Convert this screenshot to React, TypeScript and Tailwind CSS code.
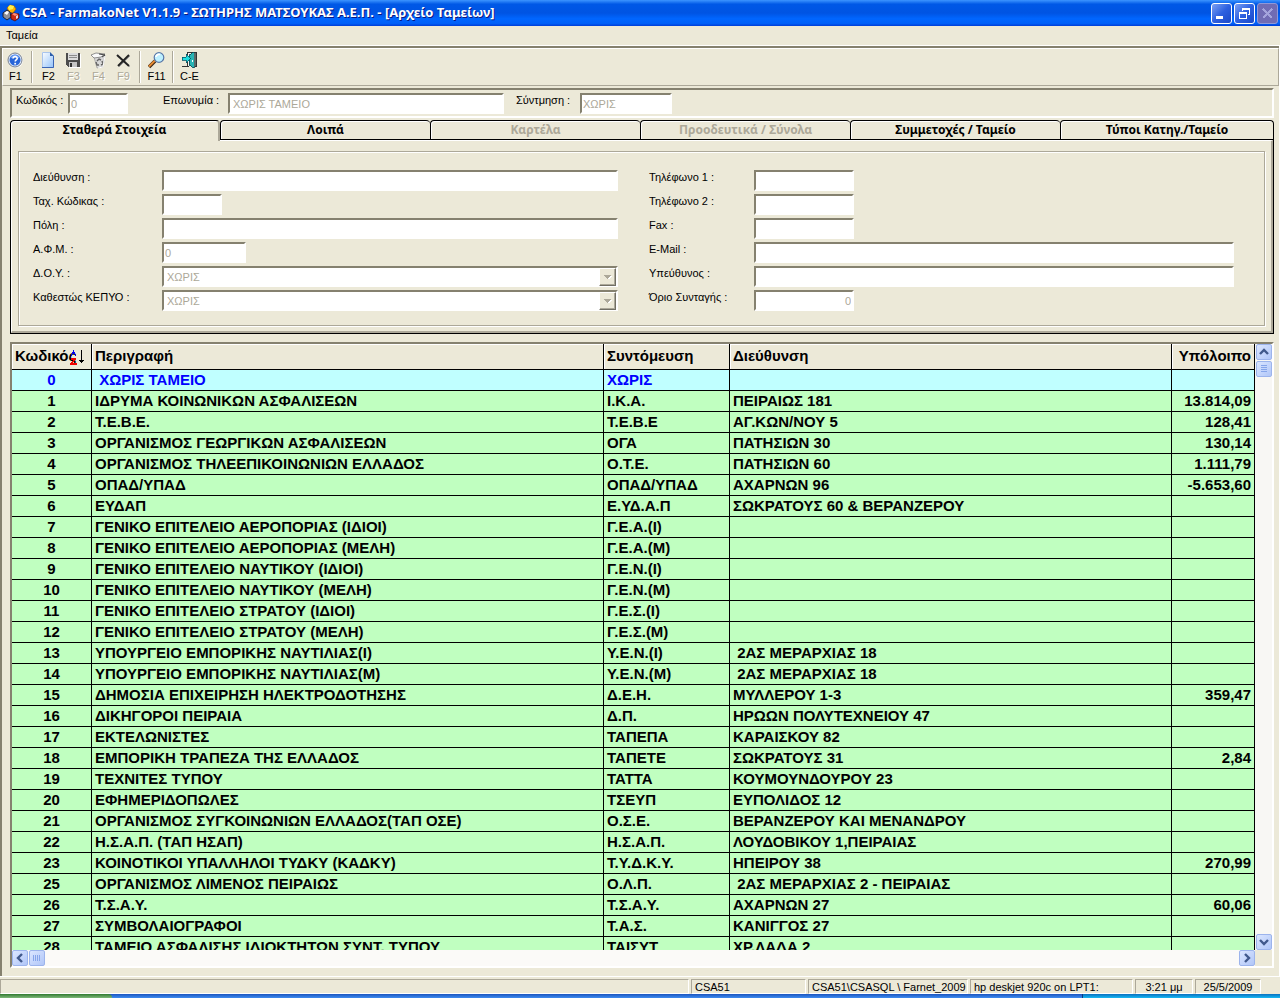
import React from "react";
import clsx from "clsx";

type Fund = [string, string, string, string, string];

const funds: Fund[] = [
  ["0", " ΧΩΡΙΣ ΤΑΜΕΙΟ", "ΧΩΡΙΣ", "", ""],
  ["1", "ΙΔΡΥΜΑ ΚΟΙΝΩΝΙΚΩΝ ΑΣΦΑΛΙΣΕΩΝ", "Ι.Κ.Α.", "ΠΕΙΡΑΙΩΣ 181", "13.814,09"],
  ["2", "Τ.Ε.Β.Ε.", "Τ.Ε.Β.Ε", "ΑΓ.ΚΩΝ/ΝΟΥ 5", "128,41"],
  ["3", "ΟΡΓΑΝΙΣΜΟΣ ΓΕΩΡΓΙΚΩΝ ΑΣΦΑΛΙΣΕΩΝ", "ΟΓΑ", "ΠΑΤΗΣΙΩΝ 30", "130,14"],
  ["4", "ΟΡΓΑΝΙΣΜΟΣ ΤΗΛΕΕΠΙΚΟΙΝΩΝΙΩΝ ΕΛΛΑΔΟΣ", "Ο.Τ.Ε.", "ΠΑΤΗΣΙΩΝ 60", "1.111,79"],
  ["5", "ΟΠΑΔ/ΥΠΑΔ", "ΟΠΑΔ/ΥΠΑΔ", "ΑΧΑΡΝΩΝ 96", "-5.653,60"],
  ["6", "ΕΥΔΑΠ", "Ε.ΥΔ.Α.Π", "ΣΩΚΡΑΤΟΥΣ 60 & ΒΕΡΑΝΖΕΡΟΥ", ""],
  ["7", "ΓΕΝΙΚΟ ΕΠΙΤΕΛΕΙΟ ΑΕΡΟΠΟΡΙΑΣ (ΙΔΙΟΙ)", "Γ.Ε.Α.(Ι)", "", ""],
  ["8", "ΓΕΝΙΚΟ ΕΠΙΤΕΛΕΙΟ ΑΕΡΟΠΟΡΙΑΣ (ΜΕΛΗ)", "Γ.Ε.Α.(Μ)", "", ""],
  ["9", "ΓΕΝΙΚΟ ΕΠΙΤΕΛΕΙΟ ΝΑΥΤΙΚΟΥ (ΙΔΙΟΙ)", "Γ.Ε.Ν.(Ι)", "", ""],
  ["10", "ΓΕΝΙΚΟ ΕΠΙΤΕΛΕΙΟ ΝΑΥΤΙΚΟΥ (ΜΕΛΗ)", "Γ.Ε.Ν.(Μ)", "", ""],
  ["11", "ΓΕΝΙΚΟ ΕΠΙΤΕΛΕΙΟ ΣΤΡΑΤΟΥ (ΙΔΙΟΙ)", "Γ.Ε.Σ.(Ι)", "", ""],
  ["12", "ΓΕΝΙΚΟ ΕΠΙΤΕΛΕΙΟ ΣΤΡΑΤΟΥ (ΜΕΛΗ)", "Γ.Ε.Σ.(Μ)", "", ""],
  ["13", "ΥΠΟΥΡΓΕΙΟ ΕΜΠΟΡΙΚΗΣ ΝΑΥΤΙΛΙΑΣ(Ι)", "Υ.Ε.Ν.(Ι)", " 2ΑΣ ΜΕΡΑΡΧΙΑΣ 18", ""],
  ["14", "ΥΠΟΥΡΓΕΙΟ ΕΜΠΟΡΙΚΗΣ ΝΑΥΤΙΛΙΑΣ(Μ)", "Υ.Ε.Ν.(Μ)", " 2ΑΣ ΜΕΡΑΡΧΙΑΣ 18", ""],
  ["15", "ΔΗΜΟΣΙΑ ΕΠΙΧΕΙΡΗΣΗ ΗΛΕΚΤΡΟΔΟΤΗΣΗΣ", "Δ.Ε.Η.", "ΜΥΛΛΕΡΟΥ 1-3", "359,47"],
  ["16", "ΔΙΚΗΓΟΡΟΙ ΠΕΙΡΑΙΑ", "Δ.Π.", "ΗΡΩΩΝ ΠΟΛΥΤΕΧΝΕΙΟΥ 47", ""],
  ["17", "ΕΚΤΕΛΩΝΙΣΤΕΣ", "ΤΑΠΕΠΑ", "ΚΑΡΑΙΣΚΟΥ 82", ""],
  ["18", "ΕΜΠΟΡΙΚΗ ΤΡΑΠΕΖΑ ΤΗΣ ΕΛΛΑΔΟΣ", "ΤΑΠΕΤΕ", "ΣΩΚΡΑΤΟΥΣ 31", "2,84"],
  ["19", "ΤΕΧΝΙΤΕΣ ΤΥΠΟΥ", "ΤΑΤΤΑ", "ΚΟΥΜΟΥΝΔΟΥΡΟΥ 23", ""],
  ["20", "ΕΦΗΜΕΡΙΔΟΠΩΛΕΣ", "ΤΣΕΥΠ", "ΕΥΠΟΛΙΔΟΣ 12", ""],
  ["21", "ΟΡΓΑΝΙΣΜΟΣ ΣΥΓΚΟΙΝΩΝΙΩΝ ΕΛΛΑΔΟΣ(ΤΑΠ ΟΣΕ)", "Ο.Σ.Ε.", "ΒΕΡΑΝΖΕΡΟΥ ΚΑΙ ΜΕΝΑΝΔΡΟΥ", ""],
  ["22", "Η.Σ.Α.Π. (ΤΑΠ ΗΣΑΠ)", "Η.Σ.Α.Π.", "ΛΟΥΔΟΒΙΚΟΥ 1,ΠΕΙΡΑΙΑΣ", ""],
  ["23", "ΚΟΙΝΟΤΙΚΟΙ ΥΠΑΛΛΗΛΟΙ ΤΥΔΚΥ (ΚΑΔΚΥ)", "Τ.Υ.Δ.Κ.Υ.", "ΗΠΕΙΡΟΥ 38", "270,99"],
  ["25", "ΟΡΓΑΝΙΣΜΟΣ ΛΙΜΕΝΟΣ ΠΕΙΡΑΙΩΣ", "Ο.Λ.Π.", " 2ΑΣ ΜΕΡΑΡΧΙΑΣ 2 - ΠΕΙΡΑΙΑΣ", ""],
  ["26", "Τ.Σ.Α.Υ.", "Τ.Σ.Α.Υ.", "ΑΧΑΡΝΩΝ 27", "60,06"],
  ["27", "ΣΥΜΒΟΛΑΙΟΓΡΑΦΟΙ", "Τ.Α.Σ.", "ΚΑΝΙΓΓΟΣ 27", ""],
  ["28", "ΤΑΜΕΙΟ ΑΣΦΑΛΙΣΗΣ ΙΔΙΟΚΤΗΤΩΝ ΣΥΝΤ. ΤΥΠΟΥ", "ΤΑΙΣΥΤ", "ΧΡ.ΛΑΔΑ 2", ""],
];

const tabs = [
  { title: "Σταθερά Στοιχεία", disabled: false },
  { title: "Λοιπά", disabled: false },
  { title: "Καρτέλα", disabled: true },
  { title: "Προοδευτικά / Σύνολα", disabled: true },
  { title: "Συμμετοχές / Ταμείο", disabled: false },
  { title: "Τύποι Κατηγ./Ταμείο", disabled: false },
];

const sunken =
  "border-2 border-t-[#85816f] border-l-[#85816f] border-b-white border-r-white";

const AppIcon = () => (
  <svg className="h-[18px] w-[18px]" viewBox="0 0 18 18">
    <path d="M5 4l3-3 4 1 2 3-3 4-4-1z" fill="#ffb400" stroke="#a86000" strokeWidth="0.7" />
    <path d="M6 3l2-2 4 1-1 3-4 1z" fill="#fff04a" />
    <path d="M1 9l4-3 3 2 1 5-4 3-4-3z" fill="#8f8f96" stroke="#1c1c28" strokeWidth="0.9" />
    <path d="M2 9l3-2 2 1-2 3z" fill="#fff" />
    <path d="M9 10l3-1 5 1v4l-4 3-4-2z" fill="#c82a14" stroke="#400808" strokeWidth="0.7" />
    <path d="M10 10l2-1 4 1-3 2z" fill="#ff8c78" />
    <path d="M14 12l2-1v3l-2 1z" fill="#e8d8e0" />
  </svg>
);

const HelpIcon = () => (
  <svg className="h-[17px] w-[17px]" viewBox="0 0 17 17">
    <circle cx="8.500" cy="8.500" r="7.500" fill="#fff" />
    <circle cx="8" cy="8" r="7" fill="#dce8fa" stroke="#777f8c" />
    <circle cx="8" cy="8" r="5.500" fill="#2865d8" />
    <path d="M4 6a4.500 4.500 0 0 1 8 0" stroke="#6da0f8" strokeWidth="1.5" fill="none" />
    <path d="M6 6.500C6 4 10.500 4 10.200 6.400 10 8 8.200 7.800 8.200 9.600" stroke="#fff" strokeWidth="1.6" fill="none" />
    <rect x="7.300" y="10.800" width="1.800" height="1.700" fill="#fff" />
  </svg>
);

const NewIcon = () => (
  <svg className="h-[17px] w-[17px]" viewBox="0 0 17 17">
    <defs>
      <linearGradient id="sheet" x1="0" y1="0" x2="1" y2="1">
        <stop offset="0" stopColor="#fff" />
        <stop offset="1" stopColor="#8fc0fa" />
      </linearGradient>
    </defs>
    <path d="M2 0h8l4 4v12H2z" fill="url(#sheet)" />
    <path d="M2.500 16V.5H10" fill="none" stroke="#a9c4ec" />
    <path d="M13.500 4v11.500H2" fill="none" stroke="#3a64b4" />
    <path d="M10 0v4h4z" fill="#2e5ea8" />
  </svg>
);

const SaveIcon = () => (
  <svg className="h-[17px] w-[17px]" viewBox="0 0 17 17" shapeRendering="crispEdges">
    <path d="M2 2h14v14H4l-2-2z" fill="#fff" />
    <path d="M1 1h14v14H3l-2-2z" fill="#4c4c4c" />
    <rect x="3" y="1" width="10" height="7" fill="#dcdcdc" />
    <path d="M4 3.500h8M4 5.500h8" stroke="#8c8c8c" />
    <rect x="4" y="10" width="8" height="5" fill="#c6c6c6" />
    <rect x="5" y="11" width="2" height="4" fill="#333" />
  </svg>
);

const RecycleIcon = () => (
  <svg className="h-[17px] w-[17px]" viewBox="0 0 17 17">
    <path d="M4 5l11-2-2 12-6 1z" fill="#d8d8d8" stroke="#999" strokeWidth="0.7" />
    <path d="M1 3l5-2 9 1-4 3-7 1z" fill="#fafafa" stroke="#777" strokeWidth="0.8" />
    <path d="M9 2l6 1-3 2" fill="none" stroke="#444" />
    <path d="M7 9l2-2 2 1M12 9l1 3-2 1M9 13H7l-1-3" fill="none" stroke="#666" strokeWidth="1.4" />
    <path d="M8 16l5-1 2-11" fill="none" stroke="#fff" />
  </svg>
);

const DeleteIcon = () => (
  <svg className="h-[17px] w-[17px]" viewBox="0 0 17 17">
    <path d="M3 4l12 11M15 4L4 15" stroke="#aaa" strokeWidth="1" />
    <path d="M2 3l12 11" stroke="#222" strokeWidth="2" />
    <path d="M14 3L3 14" stroke="#222" strokeWidth="2" />
  </svg>
);

const SearchIcon = () => (
  <svg className="h-[17px] w-[17px]" viewBox="0 0 17 17">
    <path d="M7 9l-6 6" stroke="#3a2410" strokeWidth="3.500" />
    <path d="M7 8.500l-6 6" stroke="#e58a32" strokeWidth="2" />
    <circle cx="11" cy="5.500" r="4.800" fill="#bdf0ff" stroke="#5877a8" strokeWidth="1.2" />
    <path d="M8 5a3 3 0 0 1 4-2.500" stroke="#fff" strokeWidth="1.8" fill="none" />
  </svg>
);

const ExitIcon = () => (
  <svg className="h-[17px] w-[17px]" viewBox="0 0 17 17" shapeRendering="crispEdges">
    <path d="M6.500 14V.5h9V14" fill="#f4f4f4" stroke="#333" />
    <path d="M8 3l5-3v16l-5-3z" fill="#28b4b4" stroke="#0a4450" strokeWidth="0.8" />
    <path d="M13 1h2v13h-2z" fill="#5a6a6a" />
    <path d="M1 5h4V2l5 4.500-5 4.500V8H1z" fill="#20dede" stroke="#065a6a" strokeWidth="0.8" />
    <path d="M1 14.500h7M14 14.500h2" stroke="#333" />
    <rect x="11" y="8" width="1" height="2" fill="#fff" />
  </svg>
);

const SortIcon = () => (
  <svg
    className="absolute top-[5px] right-[6px] h-4 w-4"
    viewBox="0 0 16 16"
    shapeRendering="crispEdges"
  >
    <path d="M4 1h1v2h1v2h1v2H6V5H3v2H2V5h1V3h1z" fill="#0000f0" />
    <path d="M2 9h5v2H6v1H5v1H4v1h4v2H1v-2h1v-1h1v-1h1v-1H2z" fill="#f00000" />
    <path d="M12 1h1v10h2v1h-1v1h-1v1h-1v-1h-1v-1h-1v-1h2z" fill="#000" />
  </svg>
);

const ToolButton: React.FC<{
  icon: React.ReactNode;
  label: string;
  disabled?: boolean;
}> = ({ icon, label, disabled }) => (
  <button
    disabled={disabled}
    className={clsx(
      "flex w-[25px] flex-col items-center text-[11px] leading-[14px]",
      disabled && "text-[#aca899] [text-shadow:1px_1px_0_#fff]"
    )}
  >
    {icon}
    {label}
  </button>
);

const Separator = () => (
  <div className="mx-[3px] h-8 w-[2px] border-r border-l border-r-white border-l-[#aca899]" />
);

const Field: React.FC<{
  id: string;
  label: string;
  labelWidth: string;
  width?: string;
  value?: string;
  disabled?: boolean;
  select?: boolean;
  right?: boolean;
  inset?: boolean;
}> = ({ id, label, labelWidth, width = "flex-1", value = "", disabled, select, right, inset }) => (
  <div className="flex">
    <label htmlFor={id} className={clsx("shrink-0 leading-[14px] whitespace-nowrap", labelWidth)}>
      {label}
    </label>
    {select ? (
      <div className="relative flex-1">
        <select
          id={id}
          disabled
          className={clsx(
            "block h-[21px] w-full appearance-none bg-white px-[3px] leading-4 text-[#aca899] opacity-100",
            sunken
          )}
        >
          <option>{value}</option>
        </select>
        <span className="pointer-events-none absolute top-[2px] right-[2px] flex h-[18px] w-[17px] items-center justify-center border border-t-white border-r-[#716f64] border-b-[#716f64] border-l-white bg-[#ece9d8] shadow-[inset_-1px_-1px_0_#aca899]">
          <svg className="h-[5px] w-[9px]" viewBox="0 0 9 5" shapeRendering="crispEdges">
            <path d="M2 1h7l-3 4z" fill="#fff" />
            <path d="M1 0h7l-3.500 4z" fill="#aca899" />
          </svg>
        </span>
      </div>
    ) : (
      <input
        id={id}
        defaultValue={value}
        disabled={disabled}
        className={clsx(
          "h-[21px] min-w-0 bg-white disabled:text-[#aca899]",
          sunken,
          width,
          right && "text-right",
          inset ? "px-[3px]" : "px-px"
        )}
      />
    )}
  </div>
);

const TitleButton: React.FC<{
  name: string;
  disabled?: boolean;
  children: React.ReactNode;
}> = ({ name, disabled, children }) => (
  <button
    aria-label={name}
    disabled={disabled}
    className={clsx(
      "flex h-[21px] w-[21px] items-center justify-center rounded-[3px] border",
      disabled
        ? "border-[#8f98d8] bg-[#706cb4]"
        : "border-white bg-linear-to-br from-[#7d9ff2] via-[#2d60e0] to-[#1a48c8]"
    )}
  >
    <svg className="h-[17px] w-[17px]" viewBox="0 0 17 17" shapeRendering="crispEdges">
      {children}
    </svg>
  </button>
);

const ScrollButton: React.FC<{ name: string; d: string; thin?: boolean }> = ({
  name,
  d,
  thin,
}) => (
  <button
    aria-label={name}
    className="flex h-4 w-4 shrink-0 items-center justify-center rounded-[2px] border border-[#9cb4ec] bg-linear-to-br from-[#dbe6ff] to-[#b0c6f8]"
  >
    <svg className="h-3 w-3" viewBox="0 0 12 12">
      <path
        d={d}
        fill="none"
        stroke={thin ? "#86a5ea" : "#40598c"}
        strokeWidth={thin ? 1 : 2.4}
      />
    </svg>
  </button>
);

const StatusCell: React.FC<{ width: string; children?: React.ReactNode }> = ({
  width,
  children,
}) => (
  <div
    className={clsx(
      "border border-t-[#aca899] border-r-white border-b-white border-l-[#aca899] px-[3px] leading-[14px] whitespace-nowrap",
      width
    )}
  >
    {children}
  </div>
);

const FundTable = () => (
  <table className="w-full table-fixed border-separate border-spacing-0 text-[15px] leading-5 font-bold">
    <colgroup>
      <col className="w-20" />
      <col />
      <col className="w-[126px]" />
      <col className="w-[442px]" />
      <col className="w-[83px]" />
    </colgroup>
    <thead>
      <tr className="h-[26px] text-left">
        {["Κωδικός", "Περιγραφή", "Συντόμευση", "Διεύθυνση", "Υπόλοιπο"].map((head, i) => (
          <th
            key={head}
            className={clsx(
              "relative border-r border-b border-black px-[3px] pt-0 pb-[2px] shadow-[inset_1px_1px_0_#fff]",
              i === 4 && "text-right"
            )}
          >
            {head}
            {i === 0 && <SortIcon />}
          </th>
        ))}
      </tr>
    </thead>
    <tbody>
      {funds.map((fund, i) => (
        <tr
          key={fund[0]}
          className={clsx("h-[21px]", i === 0 ? "bg-[#c0ffff] text-[#0000ff]" : "bg-[#c0ffc0]")}
        >
          {fund.map((cell, col) => (
            <td
              key={col}
              className={clsx(
                "overflow-hidden border-r border-b border-black px-[3px] py-0 whitespace-pre",
                col === 0 && "text-center",
                col === 4 && "text-right"
              )}
            >
              {cell}
            </td>
          ))}
        </tr>
      ))}
    </tbody>
  </table>
);

const App: React.FC = () => {
  return (
    <div className="flex h-screen flex-col overflow-hidden bg-[#ece9d8] font-['Liberation_Sans',sans-serif] text-[11px] text-black">
      <header className="flex h-[26px] shrink-0 items-center bg-[linear-gradient(#3d95ff_0%,#0058e6_16%,#0054e3_50%,#0066ff_72%,#0060f8_90%,#003dd7_100%)] px-[2px] text-white">
        <AppIcon />
        <h1 className="ml-[2px] flex-1 font-['Noto_Sans',sans-serif] text-[13px] font-bold whitespace-nowrap [text-shadow:1px_1px_0_#0a1883]">
          CSA - FarmakoNet V1.1.9 - ΣΩΤΗΡΗΣ ΜΑΤΣΟΥΚΑΣ Α.Ε.Π. - [Αρχείο Ταμείων]
        </h1>
        <div className="flex gap-[2px]">
          <TitleButton name="Ελαχιστοποίηση">
            <rect x="3" y="11" width="7" height="3" fill="#fff" />
          </TitleButton>
          <TitleButton name="Επαναφορά">
            <path d="M6 3h8v7h-2V9h1V5H7v1H6z" fill="#fff" />
            <path d="M3 7h8v7H3zM4 9v4h6V9z" fill="#fff" fillRule="evenodd" />
          </TitleButton>
          <TitleButton name="Κλείσιμο" disabled>
            <path d="M4 4l9 9M13 4l-9 9" stroke="#a3a4dc" strokeWidth="2" />
          </TitleButton>
        </div>
      </header>

      <nav className="flex h-[19px] shrink-0 items-center px-[6px]">
        <button>Ταμεία</button>
      </nav>

      <main className="flex min-h-0 flex-1 flex-col border-t border-r border-b border-white">
        <div className="flex min-h-0 flex-1 flex-col border-t-2 border-l-2 border-[#85816f] pb-2">
          <div className="flex h-[38px] shrink-0 items-center border border-t-white border-r-[#aca899] border-b-[#aca899] border-l-white">
            <ToolButton icon={<HelpIcon />} label="F1" />
            <Separator />
            <ToolButton icon={<NewIcon />} label="F2" />
            <ToolButton icon={<SaveIcon />} label="F3" disabled />
            <ToolButton icon={<RecycleIcon />} label="F4" disabled />
            <ToolButton icon={<DeleteIcon />} label="F9" disabled />
            <Separator />
            <ToolButton icon={<SearchIcon />} label="F11" />
            <Separator />
            <ToolButton icon={<ExitIcon />} label="C-E" />
          </div>

          <div className="flex min-h-0 flex-1 flex-col pt-[2px] pr-[5px] pl-2">
            <div className={clsx("flex h-[30px] shrink-0 pt-[3px] pl-1", sunken)}>
              <Field id="code" label="Κωδικός :" labelWidth="w-[52px]" width="w-[60px]" value="0" disabled />
              <div className="w-[35px]" />
              <Field id="name" label="Επωνυμία :" labelWidth="w-[65px]" width="w-[276px]" value="ΧΩΡΙΣ ΤΑΜΕΙΟ" disabled inset />
              <div className="w-3" />
              <Field id="short" label="Σύντμηση :" labelWidth="w-16" width="w-[92px]" value="ΧΩΡΙΣ" disabled />
            </div>

            <div
              role="tablist"
              className="mt-[2px] grid shrink-0 grid-cols-[repeat(5,210fr)_214fr] font-['Noto_Sans',sans-serif] text-[12px] font-bold"
            >
              {tabs.map((tab, i) => (
                <button
                  key={tab.title}
                  role="tab"
                  aria-selected={i === 0}
                  disabled={tab.disabled}
                  className={clsx(
                    "h-[19px] rounded-t-[4px] border-t border-l border-black leading-[18px] shadow-[inset_1px_1px_0_#fff] disabled:text-[#aca899]",
                    i === 0 && "relative z-10 -mb-[2px] h-[21px] border-r-2 border-r-[#aca899] bg-[#ece9d8] pb-[2px]",
                    i === 5 && "border-r"
                  )}
                >
                  {tab.title}
                </button>
              ))}
            </div>

            <div className="shrink-0 border border-black">
              <div className="border-t border-r-2 border-b-2 border-l border-t-white border-r-[#aca899] border-b-[#aca899] border-l-white px-[6px] pt-[10px] pb-[5px]">
                <div className="border border-[#aca899] shadow-[1px_1px_0_#fff,inset_1px_1px_0_#fff]">
                  <form className="grid grid-cols-2 gap-[31px] pt-[18px] pr-[30px] pb-[14px] pl-[14px]">
                    <div className="flex flex-col gap-[3px]">
                      <Field id="address" label="Διεύθυνση :" labelWidth="w-[129px]" />
                      <Field id="zip" label="Ταχ. Κώδικας :" labelWidth="w-[129px]" width="w-[60px]" />
                      <Field id="city" label="Πόλη :" labelWidth="w-[129px]" />
                      <Field id="afm" label="Α.Φ.Μ. :" labelWidth="w-[129px]" width="w-[84px]" value="0" disabled />
                      <Field id="doy" label="Δ.Ο.Υ. :" labelWidth="w-[129px]" value="ΧΩΡΙΣ" select />
                      <Field id="kepyo" label="Καθεστώς ΚΕΠΥΟ :" labelWidth="w-[129px]" value="ΧΩΡΙΣ" select />
                    </div>
                    <div className="flex flex-col gap-[3px]">
                      <Field id="tel1" label="Τηλέφωνο 1 :" labelWidth="w-[105px]" width="w-[100px]" />
                      <Field id="tel2" label="Τηλέφωνο 2 :" labelWidth="w-[105px]" width="w-[100px]" />
                      <Field id="fax" label="Fax :" labelWidth="w-[105px]" width="w-[100px]" />
                      <Field id="email" label="E-Mail :" labelWidth="w-[105px]" />
                      <Field id="contact" label="Υπεύθυνος :" labelWidth="w-[105px]" />
                      <Field id="limit" label="Όριο Συνταγής :" labelWidth="w-[105px]" width="w-[100px]" value="0" disabled right />
                    </div>
                  </form>
                </div>
              </div>
            </div>

            <div className={clsx("mt-2 flex min-h-0 flex-1 flex-col", sunken)}>
              <div className="flex min-h-0 flex-1">
                <div className="min-w-0 flex-1 overflow-hidden">
                  <FundTable />
                </div>
                <div className="flex w-[17px] shrink-0 flex-col items-center gap-px bg-[#f8f7f4]">
                  <ScrollButton name="Πάνω" d="M2 8l4-4 4 4" />
                  <ScrollButton name="Κύλιση" d="M3 2.500h6M3 4.500h6M3 6.500h6M3 8.500h6" thin />
                  <div className="flex-1" />
                  <ScrollButton name="Κάτω" d="M2 4l4 4 4-4" />
                </div>
              </div>
              <div className="flex h-4 shrink-0 pr-[17px]">
                <div className="flex flex-1 gap-px bg-[#fbfaf8]">
                  <ScrollButton name="Αριστερά" d="M8 2L4 6l4 4" />
                  <ScrollButton name="Οριζόντια κύλιση" d="M2.500 3v6M4.500 3v6M6.500 3v6M8.500 3v6" thin />
                  <div className="flex-1" />
                  <ScrollButton name="Δεξιά" d="M4 2l4 4-4 4" />
                </div>
              </div>
            </div>
          </div>
        </div>
      </main>

      <footer className="flex h-[17px] shrink-0 gap-[2px] pt-[2px] pr-[19px]">
        <StatusCell width="flex-1" />
        <StatusCell width="w-[115px]">CSA51</StatusCell>
        <StatusCell width="w-[160px]">CSA51\CSASQL \ Farnet_2009</StatusCell>
        <StatusCell width="w-[163px]">hp deskjet 920c on LPT1:</StatusCell>
        <StatusCell width="w-[58px] text-center">3:21 μμ</StatusCell>
        <StatusCell width="w-[66px] text-center">25/5/2009</StatusCell>
      </footer>
      <div className="flex h-1 shrink-0 bg-linear-to-b from-[#1c55c0] to-[#3f8cf0]">
        <div className="w-28 rounded-tr-[4px] bg-linear-to-b from-[#2f7a2f] to-[#7fb97a]" />
        <div className="flex-1" />
        <div className="w-[198px] border-l border-[#0a3a80] bg-linear-to-b from-[#0b70c0] to-[#19b9f3]" />
      </div>
    </div>
  );
};

export default App;
